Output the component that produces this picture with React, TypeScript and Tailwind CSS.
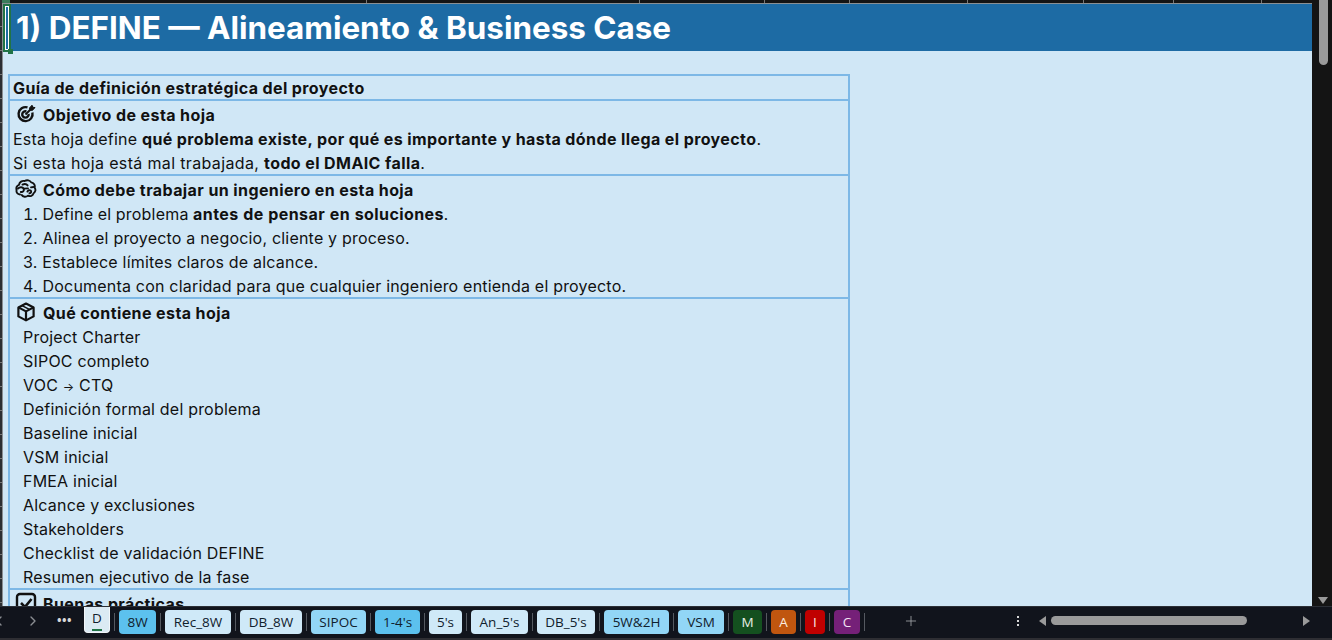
import { ChevronLeft, ChevronRight, Plus } from "lucide-react";

const tabs = [
  { name: "8W", w: "w-[37px]", cls: "bg-[#5cc1ee] text-[#10202c]" },
  { name: "Rec_8W", w: "w-[66px]", cls: "bg-[#cfe9f8] text-[#10202c]" },
  { name: "DB_8W", w: "w-[62px]", cls: "bg-[#cfe9f8] text-[#10202c]" },
  { name: "SIPOC", w: "w-[55px]", cls: "bg-[#92d6f6] text-[#10202c]" },
  { name: "1-4's", w: "w-[45px]", cls: "bg-[#5cc1ee] text-[#10202c]" },
  { name: "5's", w: "w-[33px]", cls: "bg-[#cfe9f8] text-[#10202c]" },
  { name: "An_5's", w: "w-[57px]", cls: "bg-[#cfe9f8] text-[#10202c]" },
  { name: "DB_5's", w: "w-[58px]", cls: "bg-[#cfe9f8] text-[#10202c]" },
  { name: "5W&2H", w: "w-[65px]", cls: "bg-[#92d6f6] text-[#10202c]" },
  { name: "VSM", w: "w-[46px]", cls: "bg-[#92d6f6] text-[#10202c]" },
  { name: "M", w: "w-[29px]", cls: "bg-[#14501f] text-[#e8f0e8]" },
  { name: "A", w: "w-[25px]", cls: "bg-[#c0560f] text-[#fbeee0]" },
  { name: "I", w: "w-[20px]", cls: "bg-[#c00000] text-[#fbe5e5]" },
  { name: "C", w: "w-[26px]", cls: "bg-[#752078] text-[#f3e3f4]" },
];

const contents = [
  "Project Charter",
  "SIPOC completo",
  <>VOC <span className="text-[12px]">→</span> CTQ</>,
  "Definición formal del problema",
  "Baseline inicial",
  "VSM inicial",
  "FMEA inicial",
  "Alcance y exclusiones",
  "Stakeholders",
  "Checklist de validación DEFINE",
  "Resumen ejecutivo de la fase",
];

// anchos de columna de la cabecera
const columns = ["w-[357px]", "w-[273px]", "w-[125px]", "w-[85px]", "w-[118px]", "w-[116px]", "w-[90px]", "w-[88px]"];

function TargetIcon() {
  return (
    <svg width="20" height="20" viewBox="0 0 20 20" fill="none" stroke="#111" strokeWidth="2.4">
      <path d="M11.5 3.4A7 7 0 1 0 16.4 8.6" />
      <path d="M10.4 7.4A3.2 3.2 0 1 0 12.6 10" />
      <path d="M9.5 10.5 15 5" strokeWidth="2" />
      <path d="M13.5 4 16 1.2 16.8 3.2 19 3.6 16.4 6.4 14 6Z" fill="#111" strokeWidth="1" />
    </svg>
  );
}

function BrainIcon() {
  return (
    <svg width="22" height="20" viewBox="0 0 22 20" fill="none" stroke="#111" strokeWidth="1.9" strokeLinecap="round" strokeLinejoin="round">
      <path d="M5 15.5C2.4 15.2 1 13.2 1.6 11 .8 8.6 2 6.4 4 5.8 4.6 3 7 1.4 9.6 2 12 .6 15 1.2 16.2 3.4 18.8 3.8 20.4 6.2 19.6 8.6 21 10.4 20.6 13 18.6 14.2 17.8 16.8 15.2 17.8 13 16.6 11 18.4 7.8 18 6.8 16" />
      <path d="M3 9.5C5 7.6 7.6 8 8.6 9.6 9.6 11.4 8 13.4 5.8 13" />
      <path d="M8.6 9.6 13 9.4M7.5 5.6C9.4 4.6 11.6 5 12.6 6.4" />
      <path d="M12.4 12.6C13 11.2 14.6 10.8 15.6 11.6 16.8 12.6 16 14.4 14.4 14.2M16 8.4 18.4 8" />
    </svg>
  );
}

function BoxIcon() {
  return (
    <svg width="20" height="20" viewBox="0 0 20 20" fill="none" stroke="#111" strokeWidth="2.2" strokeLinejoin="round">
      <path d="M10 1.6 17.6 5.4V14.4L10 18.4 2.4 14.4V5.4Z" />
      <path d="M2.4 5.4 10 9.4 17.6 5.4M10 9.4V18.4" />
      <path d="M6 3.6 13.8 7.6" strokeWidth="1.6" />
    </svg>
  );
}

function CheckIcon() {
  return (
    <svg width="22" height="22" viewBox="0 0 22 22" fill="none" stroke="#111" strokeWidth="2.4" strokeLinejoin="round">
      <rect x="2" y="2" width="18" height="18" rx="3" />
      <path d="M6 11 10 15 16.5 7" strokeWidth="2.6" />
    </svg>
  );
}

function Heading({ icon, children }: any) {
  return (
    <div className="flex h-[25px] items-center font-bold tracking-[0.4px]">
      <span className="flex w-[26px] justify-center">{icon}</span>
      <span className="pl-[4px] pt-[2px]">{children}</span>
    </div>
  );
}

export default function App() {
  return (
    <div className="flex h-[640px] w-[1332px] flex-col overflow-hidden bg-[#141414] font-['Inter',sans-serif] text-[16px] tracking-[0.2px] text-[#111]">
      <div className="flex min-h-0 flex-1">
        <div className="flex w-[2px] shrink-0 flex-col bg-[#2c2f33] pt-[3px]">
          {Array.from({ length: 25 }).map((_, i) => (
            <div key={i} className="h-6 shrink-0 border-b border-[#777]"></div>
          ))}
        </div>
        <div className="flex min-w-0 flex-1 flex-col">
          <div className="flex h-[3px] shrink-0">
            <div className="h-full w-[8px] bg-[#3a7a5a]"></div>
            {columns.map((w) => (
              <div key={w} className={`h-full border-r border-[#777] ${w}`}></div>
            ))}
          </div>
          <div className="relative flex min-h-0 flex-1 flex-col overflow-hidden border-l border-t border-[#8a8f93] bg-[#d0e7f6]">
            <div className="flex h-[47px] shrink-0 items-center bg-[#1d6ba4] pl-[13px] pt-[2px] text-[31.4px] font-bold tracking-normal text-white">
              1) DEFINE — Alineamiento &amp; Business Case
            </div>
            {/* celda activa */}
            <div className="absolute left-0 top-0 h-[48px] w-[8px] border-2 border-[#217346] bg-transparent outline outline-1 -outline-offset-3 outline-white"></div>
            <div className="absolute left-[5px] top-[45px] h-[5px] w-[5px] bg-[#217346]"></div>

            <div className="ml-[5px] mt-[23px] w-[842px] shrink-0 border-2 border-b-0 border-[#7db8e6]">
              <div className="flex h-[25px] items-center border-b-2 border-[#7db8e6] pl-[3px] font-bold tracking-[0.4px]">
                Guía de definición estratégica del proyecto
              </div>
              <div className="border-b-2 border-[#7db8e6] pl-[3px]">
                <Heading icon={<TargetIcon />}>Objetivo de esta hoja</Heading>
                <div className="flex h-6 items-center whitespace-pre pt-[2px]">
                  Esta hoja define <b className="tracking-[0.4px]">qué problema existe, por qué es importante y hasta dónde llega el proyecto</b>.
                </div>
                <div className="flex h-6 items-center whitespace-pre pt-[2px] tracking-[0.35px]">
                  Si esta hoja está mal trabajada, <b className="tracking-[0.4px]">todo el DMAIC falla</b>.
                </div>
              </div>
              <div className="border-b-2 border-[#7db8e6] pl-[3px]">
                <Heading icon={<BrainIcon />}>Cómo debe trabajar un ingeniero en esta hoja</Heading>
                <div className="flex h-6 items-center whitespace-pre pl-[10px] pt-[2px] tabular-nums">
                  1. Define el problema <b className="tracking-[0.4px]">antes de pensar en soluciones</b>.
                </div>
                <div className="flex h-6 items-center pl-[10px] pt-[2px]">2. Alinea el proyecto a negocio, cliente y proceso.</div>
                <div className="flex h-6 items-center pl-[10px] pt-[2px]">3. Establece límites claros de alcance.</div>
                <div className="flex h-6 items-center pl-[10px] pt-[2px]">4. Documenta con claridad para que cualquier ingeniero entienda el proyecto.</div>
              </div>
              <div className="border-b-2 border-[#7db8e6] pl-[3px]">
                <Heading icon={<BoxIcon />}>Qué contiene esta hoja</Heading>
                {contents.map((item, i) => (
                  <div key={i} className="h-6 whitespace-pre pl-[10px] pt-[2px] leading-[22px]">{item}</div>
                ))}
              </div>
              <div className="pl-[3px]">
                <Heading icon={<CheckIcon />}>Buenas prácticas</Heading>
              </div>
            </div>
          </div>
        </div>

        <div className="flex w-[20px] shrink-0 flex-col items-center">
          <div className="ml-[2px] h-[65px] w-[9px] rounded-b-full bg-[#9a9a9a]"></div>
          <div className="mb-[2px] ml-[2px] mt-auto h-0 w-0 border-x-[5px] border-t-[7px] border-x-transparent border-t-[#9a9a9a]"></div>
        </div>
      </div>

      <div className="flex h-[34px] shrink-0 items-start border-b-2 border-t border-b-[#2e2e33] border-t-[#2b2f36] bg-[#11141c] font-['Open_Sans',sans-serif] text-[13.5px] tracking-normal">
        <div className="flex h-[27px] w-[84px] shrink-0 items-center text-[#8b8e93]">
          <ChevronLeft size={16} className="-ml-[9px]" />
          <ChevronRight size={16} className="ml-[18px]" />
          <span className="ml-[16px] text-[12px] font-bold tracking-[0.5px] text-[#d8d8d8]">•••</span>
        </div>
        <div className="flex h-[26px] w-[26px] shrink-0 flex-col items-center rounded-b-[4px] border border-t-0 border-[#f2f6f9] bg-[#dbeaf3] text-[#10202c]">
          <span className="leading-[22px]">D</span>
          <span className="h-[2px] w-[10px] bg-[#217346]"></span>
        </div>
        <div className="mt-[3px] flex items-center">
          {tabs.map((tab) => (
            <div key={tab.name} className="flex items-center">
              <span className="mx-[4px] h-[18px] w-px bg-[#555960]"></span>
              <div className={`flex h-[24px] items-center justify-center rounded-[4px] ${tab.w} ${tab.cls}`}>{tab.name}</div>
            </div>
          ))}
          <span className="mx-[4px] h-[18px] w-px bg-[#555960]"></span>
        </div>
        <div className="ml-[34px] mt-[6px] text-[#a8abb0]">
          <Plus size={16} strokeWidth={1.2} />
        </div>
        <div className="ml-[98px] mt-[9px] flex flex-col gap-[2px]">
          <span className="h-[2px] w-[2px] bg-[#d8d8d8]"></span>
          <span className="h-[2px] w-[2px] bg-[#d8d8d8]"></span>
          <span className="h-[2px] w-[2px] bg-[#d8d8d8]"></span>
        </div>
        <div className="ml-[20px] mt-[9px] h-0 w-0 border-y-[5px] border-r-[7px] border-y-transparent border-r-[#9a9a9a]"></div>
        <div className="ml-[5px] mt-[9px] h-[9px] w-[196px] rounded-full bg-[#9a9a9a]"></div>
        <div className="ml-[56px] mt-[9px] h-0 w-0 border-y-[5px] border-l-[7px] border-y-transparent border-l-[#9a9a9a]"></div>
      </div>
    </div>
  );
}
